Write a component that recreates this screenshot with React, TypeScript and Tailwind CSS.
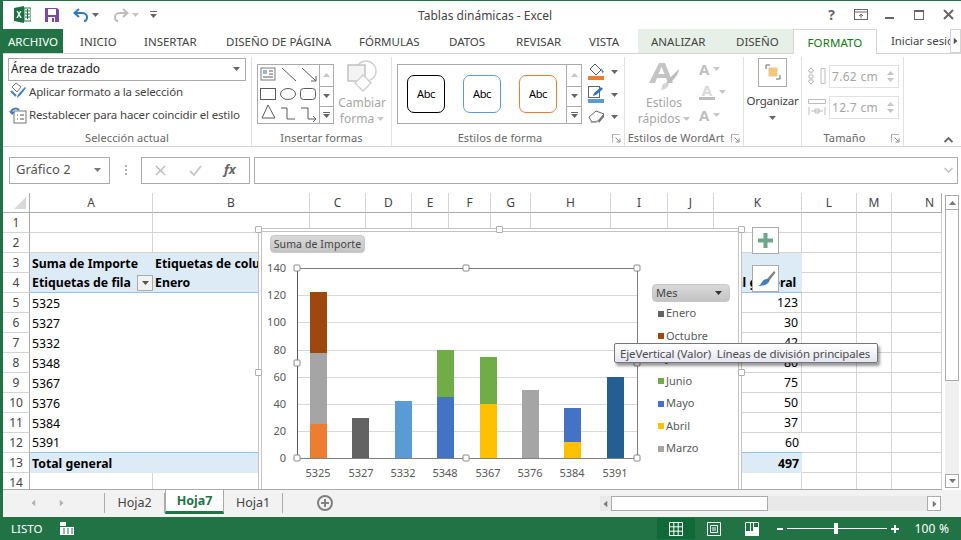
import React from "react";

const cols = ["A","B","C","D","E","F","G","H","I","J","K","L","M","N"];
const values: Record<number,string> = {5:"123",6:"30",7:"42",8:"80",9:"75",10:"50",11:"37",12:"60",13:"497"};
const labels: Record<number,string> = {5:"5325",6:"5327",7:"5332",8:"5348",9:"5367",10:"5376",11:"5384",12:"5391"};

function Caret({ className = "" }: { className?: string }) {
  return <svg width="7" height="4" viewBox="0 0 7 4" className={className}><path d="M0 0h7L3.5 4z" fill="currentColor"/></svg>;
}

function Launcher() {
  return <svg width="9" height="9" viewBox="0 0 9 9" className="text-[#8a8a8a]"><path d="M0.5 4V.5H8M.5.5V8.5" fill="none" stroke="currentColor" opacity=".6"/><path d="M3.5 3.5L7.5 7.5M8 4.5V8H4.5" fill="none" stroke="currentColor"/></svg>;
}

function GalleryScroll() {
  return (
    <div className="w-[15px] flex flex-col border-l border-[#ababab] text-[#666]">
      <div className="h-[21px] flex items-center justify-center text-[#c6c6c6]"><Caret className="rotate-180" /></div>
      <div className="h-[20px] flex items-center justify-center border-t border-[#ababab]"><Caret /></div>
      <div className="flex-1 flex flex-col items-center justify-center gap-[1px] border-t border-[#ababab]"><div className="w-[7px] h-px bg-[#666]"/><Caret /></div>
    </div>
  );
}

function Group({ width, label, launcher, children, border = true }: { width: string; label?: string; launcher?: boolean; children: React.ReactNode; border?: boolean }) {
  return (
    <div className={`${width} h-full flex flex-col shrink-0 ${border ? "border-r border-[#e1e1e1]" : ""}`}>
      <div className="h-[75px] flex">{children}</div>
      <div className={`h-[14px] flex items-center justify-center relative pb-[2px] text-[11px] tracking-[0.1px] text-[#666] whitespace-nowrap ${launcher ? "pr-[16px]" : ""}`}>
        {label}
        {launcher && <span className="absolute right-[3px] top-[2px]"><Launcher /></span>}
      </div>
    </div>
  );
}

function ShapeGallery() {
  return (
    <div className="w-[77px] h-[60px] mt-[7px] ml-[5px] border border-[#ababab] flex">
      <svg width="61" height="58" viewBox="0 0 61 58" className="shrink-0">
        <g fill="none" stroke="#5a5a5a" strokeWidth="1">
          <rect x="3" y="3" width="14" height="12" stroke="#7a7a7a"/>
          <path d="M5 6h4M5 8h4" stroke="#2b6fb6" strokeWidth="1.2"/>
          <path d="M11 6h4M11 9h4M5 12h10"/>
          <path d="M24 3L38 16"/>
          <path d="M44 3L58 16M58 11V16H53"/>
          <rect x="2.5" y="23.5" width="15" height="11"/>
          <ellipse cx="30" cy="29" rx="7.5" ry="5.5"/>
          <rect x="42.5" y="23.5" width="15" height="11" rx="3"/>
          <path d="M4 55L10 42L17 55z" transform="translate(0 -2)"/>
          <path d="M23 43h6v11h8"/>
          <path d="M43 43h7v11h8M55 51l3 3-3 3"/>
        </g>
      </svg>
      <GalleryScroll />
    </div>
  );
}

function AbcBox({ cls }: { cls: string }) {
  return <div className={`w-[38px] h-[38px] rounded-[7px] border bg-white flex items-center justify-center text-[11px] tracking-[-0.3px] text-black ${cls}`}>Abc</div>;
}

function SmallA({ line }: { line?: boolean }) {
  return (
    <div className="h-[23px] flex items-center gap-[4px] text-[#c6c6c6]">
      <div className="flex flex-col items-center">
        <span className={`text-[15px] leading-[13px] font-bold ${line ? "text-[#d9d9d9]" : "text-[#bfbfbf]"}`}>A</span>
        {line && <div className="w-[16px] h-[3px] bg-[#bdbdbd]"/>}
      </div>
      <Caret />
    </div>
  );
}

function SizeField({ v, icon }: { v: string; icon: React.ReactNode }) {
  return (
    <div className="flex items-center gap-[3px]">
      {icon}
      <div className="w-[70px] h-[23px] border border-[#e1e1e1] flex items-center justify-between pl-[2px] pr-[4px] text-[12px] tracking-[0.3px] text-[#a6a6a6]">
        <span className="pt-[2px]">{v}</span>
        <span className="flex flex-col gap-[3px] text-[#c6c6c6]"><Caret className="rotate-180"/><Caret/></span>
      </div>
    </div>
  );
}

function Ribbon() {
  return (
    <div className="h-[93px] flex items-stretch border-b border-[#d4d4d4] pt-[3px] relative">
      <Group width="w-[249px]" label="Selección actual">
        <div className="flex flex-col pl-[5px] w-full">
          <div className="w-[238px] h-[23px] mt-[1px] border border-[#ababab] flex items-center justify-between pl-[2px] pr-[5px] text-[12px] text-[#222]">
            <span>Área de trazado</span><Caret className="text-[#666]"/>
          </div>
          <div className="h-[23px] -mt-[1px] flex items-center gap-[2px] text-[11.500px] tracking-[-0.15px] text-[#444] whitespace-nowrap">
            <svg width="18" height="18" viewBox="0 0 18 18" className="ml-[1px]"><path d="M3 5l4-4 5 4-4 5z" fill="#fff" stroke="#777"/><path d="M8 16c0-3 3-6 8-11l1 1c-4 5-6 8-9 10z" fill="#3f7fbf"/><path d="M2 9l5 5" stroke="#3f7fbf" strokeWidth="2"/></svg>
            <span>Aplicar formato a la selección</span>
          </div>
          <div className="h-[24px] flex items-center gap-[2px] text-[11.500px] tracking-[-0.15px] text-[#444] whitespace-nowrap">
            <svg width="18" height="18" viewBox="0 0 18 18" className="ml-[1px]"><rect x="5" y="5" width="12" height="12" fill="#fff" stroke="#777"/><path d="M8 9h1M11 9h4M8 13h1M11 13h4" stroke="#555"/><path d="M2 7c0-4 5-6 8-3" fill="none" stroke="#3f7fbf" strokeWidth="2"/><path d="M0 5l3 4 3-3z" fill="#3f7fbf"/></svg>
            <span>Restablecer para hacer coincidir el estilo</span>
          </div>
        </div>
      </Group>
      <Group width="w-[140px]" label="Insertar formas">
        <ShapeGallery />
        <div className="flex flex-col items-center w-[52px] ml-[2px] text-[12px] leading-[16px] text-[#a6a6a6]">
          <svg width="32" height="32" viewBox="0 0 32 32" className="mt-[3px] mb-[3px]"><circle cx="20" cy="11" r="10" fill="#fff" stroke="#d0d0d0" strokeWidth="1.4"/><rect x="2" y="5" width="17" height="16" fill="#f4f4f4" stroke="#bdbdbd" strokeWidth="1.4"/><path d="M17 15l8 8-8 8-8-8z" fill="#fff" stroke="#cfcfcf" strokeWidth="1.4"/></svg>
          <span>Cambiar</span>
          <span className="flex items-center gap-[3px]">forma<Caret className="text-[#c6c6c6]"/></span>
        </div>
      </Group>
      <Group width="w-[233px]" label="Estilos de forma" launcher>
        <div className="w-[185px] h-[60px] mt-[7px] ml-[5px] border border-[#ababab] flex">
          <div className="flex-1 flex items-center gap-[18px] pl-[9px]">
            <AbcBox cls="border-black"/>
            <AbcBox cls="border-[#5b9bd5]"/>
            <AbcBox cls="border-[#ed7d31]"/>
          </div>
          <GalleryScroll />
        </div>
        <div className="flex flex-col ml-[6px] mt-[6px] gap-[5px] text-[#666]">
          <div className="h-[18px] flex items-center gap-[6px]">
            <svg width="17" height="17" viewBox="0 0 17 17"><path d="M7 1l6 6-5 5-6-6z" fill="#fff" stroke="#555"/><path d="M13 5l3 4-2 1z" fill="#3f7fbf"/><rect x="0" y="13" width="16" height="4" fill="#ed7d31"/></svg><Caret/>
          </div>
          <div className="h-[18px] flex items-center gap-[6px]">
            <svg width="17" height="17" viewBox="0 0 17 17"><rect x=".5" y=".5" width="11" height="11" fill="none" stroke="#666"/><path d="M5 10l1-3 7-6 2 2-7 6z" fill="#2f78bd"/><rect x="0" y="13" width="16" height="4" fill="#5b9bd5"/></svg><Caret/>
          </div>
          <div className="h-[16px] flex items-center gap-[6px]">
            <svg width="17" height="15" viewBox="0 0 17 15"><path d="M1 8l7-6 8 3-6 7-6 1z" fill="#fff" stroke="#666"/><path d="M10 12l6-7v3l-5 6z" fill="#777"/><path d="M1 8l3 5 6-1 -2 2H3z" fill="#aaa"/></svg><Caret/>
          </div>
        </div>
      </Group>
      <Group width="w-[119px]" label="Estilos de WordArt" launcher>
        <div className="flex flex-col items-center w-[74px] pl-[4px] text-[12px] leading-[16px] text-[#a6a6a6]">
          <svg width="32" height="30" viewBox="0 0 32 30" className="mt-[5px] mb-[3px]"><path d="M11 1h6l8 20h-5l-2-5H9l-2 5H1zM10.500 12h6L13.500 5z" fill="#c4c4c4" fillRule="evenodd"/><path d="M18 22c1-4 6-8 13-15 0 4-5 11-9 14z" fill="#bdbdbd"/><path d="M14 24c1-3 4-4 7-2-1 3-4 6-9 6 2-1 2-2 2-4z" fill="#d4d4d4"/></svg>
          <span>Estilos</span>
          <span className="flex items-center gap-[3px]">rápidos<Caret className="text-[#c6c6c6]"/></span>
        </div>
        <div className="flex flex-col mt-[1px]">
          <SmallA/><SmallA line/><SmallA/>
        </div>
      </Group>
      <Group width="w-[58px]">
        <div className="flex flex-col items-center w-full text-[11.500px] tracking-[-0.2px] text-[#444]">
          <div className="w-[29px] h-[29px] mt-[1px] border border-[#ababab] flex items-center justify-center">
            <svg width="16" height="16" viewBox="0 0 16 16"><path d="M1 5V1h4M15 11v4h-4" fill="none" stroke="#666"/><rect x="3.500" y="3.500" width="9" height="9" fill="#f0c77e"/></svg>
          </div>
          <span className="mt-[5px]">Organizar</span>
          <Caret className="mt-[7px] text-[#666]"/>
        </div>
      </Group>
      <Group width="w-[102px]" label="Tamaño" launcher>
        <div className="flex flex-col pl-[6px] pt-[8px] gap-[8px]">
          <SizeField v="7.62 cm" icon={<svg width="18" height="17" viewBox="0 0 18 17"><path d="M13 .5h4v15h-4zM3 0l-3 3h2v2h2V3h2zM3 16l-3-3h2v-2h2v2h2zM1 7h4v3H1z" fill="none" stroke="#bdbdbd"/></svg>}/>
          <SizeField v="12.7 cm" icon={<svg width="18" height="17" viewBox="0 0 18 17"><path d="M.5 .5h17v4H.5zM1 8v8M17 8v8M3 12h12M7 10h4v4H7z" fill="none" stroke="#bdbdbd"/></svg>}/>
        </div>
      </Group>
      <div className="flex-1 relative">
        <svg width="9" height="6" viewBox="0 0 9 6" className="absolute right-[8px] bottom-[3px]"><path d="M.5 5L4.500 1l4 4" fill="none" stroke="#666" strokeWidth="1.800"/></svg>
      </div>
    </div>
  );
}

function TitleBar() {
  return (
    <div className="h-[28px] flex items-center relative">
      <svg width="17" height="17" viewBox="0 0 17 17" className="ml-[11px]"><path d="M0 2l10-2v17L0 15z" fill="#1e7145"/><path d="M10 2h7v13h-7z" fill="#fff" stroke="#1e7145"/><path d="M11 5h5M11 8h5M11 11h5M13.500 3v10" stroke="#1e7145"/><path d="M2.500 5l1.800 3.300L2.300 12h1.500l1.200-2.300L6.200 12h1.600L5.700 8.300 7.600 5H6.100L5 7.100 3.900 5z" fill="#fff"/></svg>
      <svg width="16" height="16" viewBox="0 0 16 16" className="ml-[13px]"><path d="M1 1h12l2 2v12H1z" fill="#7d47a3"/><rect x="4" y="2" width="8" height="6" fill="#fff"/><rect x="4" y="10" width="7" height="5" fill="#fff"/><rect x="8" y="11" width="2" height="4" fill="#7d47a3"/></svg>
      <svg width="16" height="14" viewBox="0 0 16 14" className="ml-[13px]"><path d="M6 1L1.500 5 6 9" fill="none" stroke="#2f78bd" strokeWidth="2"/><path d="M2 5h7c3 0 5 2 5 4s-1 4-3 4" fill="none" stroke="#2f78bd" strokeWidth="2"/></svg>
      <Caret className="ml-[3px] text-[#666]"/>
      <svg width="16" height="14" viewBox="0 0 16 14" className="ml-[14px]"><path d="M10 1l4.500 4L10 9" fill="none" stroke="#bdbdbd" strokeWidth="2"/><path d="M14 5H7C4 5 2 7 2 9s1 4 3 4" fill="none" stroke="#bdbdbd" strokeWidth="2"/></svg>
      <Caret className="ml-[3px] text-[#c6c6c6]"/>
      <div className="ml-[11px] flex flex-col items-center gap-[2px] text-[#666]"><div className="w-[7px] h-px bg-[#666]"/><Caret/></div>
      <div className="absolute left-[415px] top-[6px] text-[12px] text-[#444]">Tablas dinámicas - Excel</div>
      <div className="ml-auto flex items-center pr-[7px] text-[#666]">
        <span className="font-bold text-[14px] leading-none mr-[19px]">?</span>
        <svg width="14" height="11" viewBox="0 0 14 11" className="mr-[17px]"><rect x=".5" y=".5" width="13" height="10" fill="none" stroke="#666"/><path d="M.5 3h13" stroke="#666"/><path d="M7 9V5M5 7l2-2 2 2" stroke="#666" fill="none"/></svg>
        <div className="w-[9px] h-[2px] bg-[#666] mt-[7px] mr-[20px]"/>
        <div className="w-[10px] h-[10px] border border-[#666] border-t-2 mr-[19px]"/>
        <svg width="11" height="11" viewBox="0 0 11 11"><path d="M1 1l9 9M10 1l-9 9" stroke="#666" strokeWidth="2"/></svg>
      </div>
    </div>
  );
}

function Tabs() {
  return (
    <div className="h-[25px] flex items-stretch border-b border-[#d4d4d4] text-[11.500px] text-[#444] relative">
      <div className="w-[60px] h-[24px] bg-[#217346] text-white flex items-center justify-center pt-[1px] shrink-0">ARCHIVO</div>
      <div className="w-[81px] flex items-center pl-[17px] pt-[2px] shrink-0">INICIO</div>
      <div className="w-[82px] flex items-center pt-[2px] shrink-0">INSERTAR</div>
      <div className="w-[133px] flex items-center pt-[2px] shrink-0">DISEÑO DE PÁGINA</div>
      <div className="w-[90px] flex items-center pt-[2px] shrink-0">FÓRMULAS</div>
      <div className="w-[67px] flex items-center pt-[2px] shrink-0">DATOS</div>
      <div className="w-[73px] flex items-center pt-[2px] shrink-0">REVISAR</div>
      <div className="w-[49px] flex items-center pt-[2px] shrink-0">VISTA</div>
      <div className="w-[155px] h-[24px] bg-[#e6f0e6] flex items-center pl-[13px] pt-[1px] shrink-0">
        <span className="w-[85px]">ANALIZAR</span><span>DISEÑO</span>
      </div>
      <div className="w-[84px] h-[25px] bg-white border border-[#d4d4d4] border-b-0 text-[#0f7a0f] flex items-center justify-center pt-[2px] shrink-0 tracking-[0.1px]">FORMATO</div>
      <div className="flex-1 overflow-hidden whitespace-nowrap flex items-center pl-[14px] pr-[9px] tracking-[-0.1px]">Iniciar sesión</div>
      <div className="absolute right-0 top-0 w-[11px] h-[24px] bg-white border border-[#d4d4d4] flex items-center justify-center"><Caret className="-rotate-90 text-[#555]"/></div>
    </div>
  );
}

function FormulaBar() {
  return (
    <div className="h-[47px] flex items-center text-[#555]">
      <div className="w-[101px] h-[27px] ml-[6px] border border-[#ababab] flex items-center justify-between pl-[6px] pr-[8px] text-[13px]">
        <span>Gráfico 2</span><Caret className="text-[#777]"/>
      </div>
      <div className="w-[31px] flex flex-col items-center gap-[2px]">
        <div className="w-[2px] h-[2px] bg-[#b0b0b0]"/><div className="w-[2px] h-[2px] bg-[#b0b0b0]"/><div className="w-[2px] h-[2px] bg-[#b0b0b0]"/>
      </div>
      <div className="w-[109px] h-[27px] border border-[#ababab] flex items-center pl-[13px]">
        <svg width="11" height="11" viewBox="0 0 11 11"><path d="M1 1l9 9M10 1l-9 9" stroke="#bdbdbd" strokeWidth="1.500"/></svg>
        <svg width="13" height="11" viewBox="0 0 13 11" className="ml-[23px]"><path d="M1 6l4 4 7-9" fill="none" stroke="#c9c9c9" strokeWidth="2"/></svg>
        <span className="ml-[22px] font-['Liberation_Serif',serif] italic font-bold text-[13px] text-[#666]">fx</span>
      </div>
      <div className="w-[704px] h-[27px] ml-[4px] border border-[#ababab] flex items-center justify-end pr-[4px]">
        <svg width="9" height="6" viewBox="0 0 9 6"><path d="M.5 1l4 4 4-4" fill="none" stroke="#c0c0c0" strokeWidth="1.500"/></svg>
      </div>
    </div>
  );
}

function Cell({ col, row }: { col: number; row: number }) {
  const blue = (row === 3 || row === 4 || row === 13) && col <= 10;
  const noLines = row >= 3 && row <= 13 && col <= 1;
  let border = "border-r border-b border-[#d4d4d4]";
  if (noLines) border = "";
  if (blue) border = "";
  if (row === 4 && col <= 10) border = "border-b border-[#9bc2e6]";
  if (row === 12 && col <= 10) border = "border-b border-[#9bc2e6]";
  let text: React.ReactNode = null;
  let cls = "";
  if (col === 0) {
    if (row === 3) { text = "Suma de Importe"; cls = "font-bold"; }
    else if (row === 4) { text = "Etiquetas de fila"; cls = "font-bold"; }
    else if (row === 13) { text = "Total general"; cls = "font-bold"; }
    else if (labels[row]) text = labels[row];
  }
  if (col === 1) {
    if (row === 3) { text = "Etiquetas de columna"; cls = "font-bold"; }
    if (row === 4) { text = "Enero"; cls = "font-bold"; }
  }
  if (col === 10) {
    if (row === 4) { text = "Total general"; cls = "font-bold overflow-hidden"; }
    else if (values[row]) { text = values[row]; cls = `justify-end pr-[3px] ${row === 13 ? "font-bold" : ""}`; }
  }
  return (
    <div className={`h-[20px] flex items-center pl-[2px] pt-[1px] whitespace-nowrap text-[12.300px] text-black relative ${blue ? "bg-[#ddebf7]" : "bg-white"} ${border} ${cls}`}>
      {text}
      {col === 0 && row === 4 && (
        <span className="absolute right-[0px] top-[2px] w-[16px] h-[16px] border border-[#ababab] bg-[#f2f2f2] flex items-center justify-center text-[#555]"><Caret/></span>
      )}
    </div>
  );
}

const BARS: [number, number, number, string][] = [
  [310, 424, 458, "#ed7d31"], [310, 353, 424, "#a5a5a5"], [310, 292, 353, "#9e480e"],
  [352, 418, 458, "#636363"],
  [395, 401, 458, "#5b9bd5"],
  [437, 397, 458, "#4472c4"], [437, 350, 397, "#70ad47"],
  [480, 404, 458, "#ffc000"], [480, 357, 404, "#70ad47"],
  [522, 390, 458, "#a5a5a5"],
  [564, 442, 458, "#ffc000"], [564, 408, 442, "#4472c4"],
  [607, 377, 458, "#255e91"],
];
const AXIS: [string, number][] = [["140",268],["120",295],["100",322],["80",350],["60",377],["40",404],["20",431],["0",458]];
const XS: [string, number][] = [["5325",318],["5327",361],["5332",403],["5348",445],["5367",488],["5376",530],["5384",572],["5391",615]];
const HANDLES: [number, number][] = [[297,268],[466,268],[637,268],[297,363],[637,363],[297,458],[466,458],[637,458]];
const LEGEND: [string, string][] = [["Enero","#636363"],["Octubre","#9e480e"],["Julio","#5b9bd5"],["Junio","#70ad47"],["Mayo","#4472c4"],["Abril","#ffc000"],["Marzo","#a5a5a5"]];

function Handle({ className }: { className: string }) {
  return <div className={`absolute w-[7px] h-[7px] bg-white border border-[#b0b0b0] rounded-[1px] ${className}`}/>;
}

function Chart() {
  return (
    <div className="absolute left-[255px] top-[35px] w-[484px] h-[262px]">
      <div className="absolute inset-0 border border-[#c4c4c4] border-b-0 bg-white p-[2px] pb-0">
        <div className="w-full h-full border border-[#c4c4c4] border-b-0 bg-white"/>
      </div>
      <svg width="484" height="262" viewBox="258 228 484 262" className="absolute inset-0">
        {[295,322,350,377,404,431].map(y => <line key={y} x1="297" x2="637" y1={y+.5} y2={y+.5} stroke="#d9d9d9"/>)}
        {BARS.map(([x,y1,y2,c],i) => <rect key={i} x={x} y={y1} width="17" height={y2-y1} fill={c}/>)}
        <rect x="297.500" y="268.500" width="340" height="190" fill="none" stroke="#7f7f7f"/>
        <line x1="297.500" x2="297.500" y1="268" y2="458" stroke="#555"/>
        {AXIS.map(([t,y]) => <text key={t} x="286" y={y+4} textAnchor="end" fontSize="11" fill="#595959">{t}</text>)}
        {XS.map(([t,x]) => <text key={t} x={x} y="477" textAnchor="middle" fontSize="11" fill="#595959">{t}</text>)}
        {HANDLES.map(([x,y],i) => <rect key={i} x={x-3} y={y-3} width="6" height="6" rx="1" fill="#fff" stroke="#8a8a8a"/>)}
      </svg>
      <div className="absolute left-[12px] top-[7px] w-[95px] h-[18px] rounded-[4px] border border-[#c8c8c8] bg-gradient-to-b from-[#d9d9d9] to-[#c4c4c4] flex items-center justify-center text-[10.500px] tracking-[0.1px] text-[#444]">Suma de Importe</div>
      <div className="absolute left-[394px] top-[56px] w-[78px] flex flex-col">
        <div className="h-[18px] rounded-[4px] border border-[#c8c8c8] bg-gradient-to-b from-[#d9d9d9] to-[#c4c4c4] flex items-center justify-between px-[3px] pr-[7px] text-[11px] text-[#444]">
          <span>Mes</span><Caret className="text-[#333]"/>
        </div>
        <div className="flex flex-col">
          {LEGEND.map(([t,c]) => (
            <div key={t} className="h-[22.500px] flex items-center gap-[2px] pl-[6px] text-[11px] text-[#595959]">
              <span className="w-[6px] h-[6px] shrink-0" style={{ backgroundColor: c }}/>{t}
            </div>
          ))}
        </div>
      </div>
      <Handle className="-left-[3px] -top-[2px]"/>
      <Handle className="left-[238px] -top-[2px]"/>
      <Handle className="-right-[3px] -top-[2px]"/>
      <Handle className="-left-[3px] top-[141px]"/>
      <Handle className="-right-[3px] top-[141px]"/>
    </div>
  );
}

function Sheet() {
  return (
    <div className="h-[297px] flex">
      <div className="w-[939px] h-[297px] overflow-hidden relative border-b border-[#ababab] shrink-0">
        <div className="grid grid-cols-[27px_123px_157px_56px_46px_37px_42px_40px_80px_57px_46px_88px_55px_35px_50px] grid-rows-[20px_repeat(14,20px)]">
          <div className="border-r border-b border-[#ababab] relative overflow-hidden bg-white">
            <svg width="14" height="14" viewBox="0 0 14 14" className="absolute right-[2px] bottom-[2px]"><path d="M13 1v12H1z" fill="#d9d9d9"/></svg>
          </div>
          {cols.map(c => <div key={c} className={`h-[20px] border-r border-b border-[#d4d4d4] border-b-[#ababab] flex items-center text-[12px] text-[#444] ${c === "N" ? "border-r-[#ababab] pl-[33px]" : "justify-center"}`}>{c}</div>)}
          {Array.from({ length: 14 }, (_, i) => i + 1).flatMap(r => [
            <div key={`h${r}`} className="h-[20px] pt-[1px] border-r border-b border-[#d4d4d4] border-r-[#ababab] flex items-center justify-center text-[12px] text-[#444]">{r}</div>,
            ...cols.map((_, c) => <Cell key={`${r}-${c}`} col={c} row={r}/>),
          ])}
        </div>
        <Chart />
        <div className="absolute left-[749px] top-[34px] w-[27px] h-[27px] bg-white border border-[#ababab] flex items-center justify-center">
          <svg width="15" height="15" viewBox="0 0 15 15"><path d="M5.500 0h4v5.500H15v4H9.500V15h-4V9.500H0v-4h5.500z" fill="#6aa78b"/></svg>
        </div>
        <div className="absolute left-[749px] top-[72px] w-[27px] h-[27px] bg-white border border-[#ababab] flex items-center justify-center">
          <svg width="20" height="18" viewBox="0 0 20 18"><path d="M11 9L18 1l1.500 1.500L13 11z" fill="#7f7f7f"/><path d="M11 9c2 0 3 1 2 3-2 3-7 4-11 4 2-1 3-2 4-4s3-3 5-3z" fill="#3f7fbf"/></svg>
        </div>
        <div className="absolute left-[611px] top-[150px] w-[264px] h-[20px] rounded-[2px] border border-[#767676] bg-gradient-to-b from-white to-[#e4e5f0] shadow-[2px_3px_3px_rgba(0,0,0,0.4)] flex items-center pl-[5px] text-[11.500px] tracking-[-0.13px] text-[#4c4c4c] whitespace-pre">EjeVertical (Valor)  Líneas de división principales</div>
      </div>
      <div className="flex-1 flex flex-col relative">
        <div className="h-[15px] mt-[2px] ml-[3px] w-[14px] border border-[#ababab] flex items-center justify-center text-[#777]"><Caret className="rotate-180"/></div>
        <div className="ml-[3px] w-[14px] h-[171px] border border-t-0 border-[#ababab] bg-white"/>
        <div className="ml-[3px] w-[14px] flex-1 bg-[#f0f0f0]"/>
        <div className="h-[14px] mb-[2px] ml-[3px] w-[14px] border border-[#ababab] flex items-center justify-center text-[#777]"><Caret/></div>
      </div>
    </div>
  );
}

function SheetTabs() {
  return (
    <div className="h-[27px] flex items-start bg-[#f2f2f2] text-[12.500px] text-[#444] relative">
      <div className="w-[102px] h-[20px] mt-[3px] flex items-center border-r border-[#ababab] text-[#b0b0b0]">
        <Caret className="rotate-90 ml-[27px]"/><Caret className="-rotate-90 ml-[21px]"/>
      </div>
      <div className="w-[60px] h-[20px] mt-[3px] flex items-center justify-center border-r border-[#ababab]">Hoja2</div>
      <div className="w-[59px] h-[24px] bg-white border-b-[3px] border-[#217346] border-x border-x-[#ababab] flex items-center justify-center font-bold text-[#217346]">Hoja7</div>
      <div className="w-[59px] h-[20px] mt-[3px] flex items-center justify-center border-r border-[#ababab]">Hoja1</div>
      <div className="w-[16px] h-[16px] ml-[34px] mt-[5px] rounded-full border-2 border-[#808080] flex items-center justify-center relative">
        <div className="w-[8px] h-[2px] bg-[#808080]"/><div className="absolute w-[2px] h-[8px] bg-[#808080]"/>
      </div>
      <div className="ml-auto mr-[20px] mt-[6px] w-[341px] h-[15px] flex items-stretch bg-[#e9e9e9]">
        <div className="w-[11px] flex items-center justify-center text-[#777]"><Caret className="rotate-90"/></div>
        <div className="w-[157px] bg-white border border-[#ababab]"/>
        <div className="flex-1"/>
        <div className="w-[14px] bg-white border border-[#ababab] flex items-center justify-center text-[#777]"><Caret className="-rotate-90"/></div>
      </div>
    </div>
  );
}

function StatusBar() {
  return (
    <div className="h-[23px] -ml-[3px] w-[961px] bg-[#217346] text-white text-[11.500px] flex items-center">
      <span className="ml-[11px]">LISTO</span>
      <svg width="14" height="13" viewBox="0 0 14 13" className="ml-[18px]"><rect x="0" y="0" width="6" height="4" fill="#fff"/><path d="M0 5h14v8H0z" fill="#fff"/><path d="M3 7h2M7 7h2M11 7h2M3 9h2M7 9h2M11 9h2M3 11h2M7 11h2M11 11h2" stroke="#217346"/></svg>
      <div className="ml-[583px] w-[38px] h-[21px] bg-[#0f6a38] flex items-center justify-center">
        <svg width="14" height="14" viewBox="0 0 14 14"><path d="M.5 .5h13v13H.5zM.5 4.800h13M.5 9.200h13M4.800 .5v13M9.200 .5v13" fill="none" stroke="#fff"/></svg>
      </div>
      <svg width="14" height="14" viewBox="0 0 14 14" className="ml-[12px]"><path d="M.5 .5h13v13H.5z" fill="none" stroke="#fff"/><path d="M3.500 3.500h7v7h-7zM5 6h4M5 8h4" fill="none" stroke="#fff"/></svg>
      <svg width="14" height="14" viewBox="0 0 14 14" className="ml-[24px]"><path d="M.5 .5h13v13H.5z" fill="none" stroke="#fff"/><path d="M0 9h5V0h1v9h2V0h1v5h5v9H0z" fill="#fff"/></svg>
      <div className="w-[6px] h-[2px] bg-white ml-[18px]"/>
      <div className="ml-[4px] w-[100px] h-px bg-white relative"><div className="absolute left-[47px] -top-[5px] w-[4px] h-[11px] bg-white"/></div>
      <div className="ml-[4px] relative w-[8px] h-[8px] flex items-center justify-center"><div className="w-[8px] h-[2px] bg-white"/><div className="absolute w-[2px] h-[8px] bg-white"/></div>
      <span className="ml-[15px] text-[12px] tracking-[0.2px]">100 %</span>
    </div>
  );
}

export default function App() {
  return (
    <div className="w-[961px] h-[540px] overflow-hidden bg-white border-t border-l-[3px] border-[#217346] border-r-0 border-b-0 flex flex-col font-['Noto_Sans',sans-serif]">
      <TitleBar />
      <Tabs />
      <Ribbon />
      <FormulaBar />
      <Sheet />
      <SheetTabs />
      <StatusBar />
    </div>
  );
}
